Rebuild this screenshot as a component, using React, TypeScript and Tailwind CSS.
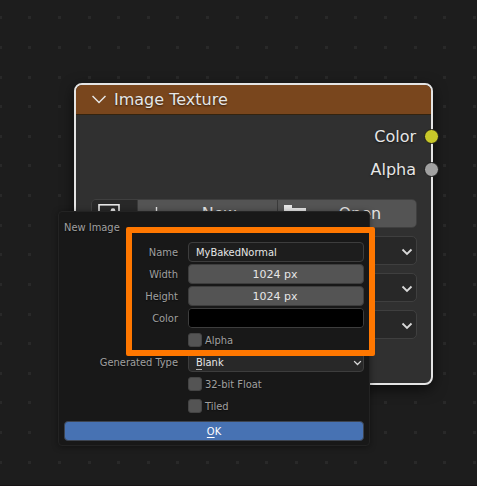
import type { ReactNode } from "react";

const GRID_STEP = 29.63;

function DotGrid() {
  const dots: ReactNode[] = [];
  for (let row = 0; row < 60; row++) {
    for (let col = 0; col < 80; col++) {
      dots.push(
        <rect
          key={`${row}-${col}`}
          x={Math.round(col * GRID_STEP - 1.3)}
          y={Math.round(row * GRID_STEP + 16.3)}
          width="3"
          height="3"
        />
      );
    }
  }
  return (
    <svg className="absolute inset-0 size-full" fill="#292929" aria-hidden="true">
      {dots}
    </svg>
  );
}

function Chevron({ className }: { className: string }) {
  return (
    <svg
      viewBox="0 0 12 8"
      className={className}
      fill="none"
      stroke="currentColor"
      strokeWidth="1.8"
      aria-hidden="true"
    >
      <path d="M1.5 1.5 L6 6 L10.5 1.5" />
    </svg>
  );
}

function HeaderChevron() {
  return (
    <svg
      viewBox="0 0 14 9"
      className="h-[9px] w-[14px]"
      fill="none"
      stroke="currentColor"
      strokeWidth="1.5"
      aria-hidden="true"
    >
      <path d="M0.5 1 L7 7.5 L13.5 1" />
    </svg>
  );
}

function ImageIcon() {
  return (
    <svg viewBox="0 0 22 20" className="h-5 w-[22px]" aria-hidden="true">
      <rect x="1" y="0.8" width="20" height="18" fill="none" stroke="#e6e6e6" strokeWidth="1.6" />
      <circle cx="15" cy="6.5" r="2.3" fill="#e6e6e6" />
      <path d="M3 17 L8 9 L12 14 L14 12 L19 17 Z" fill="#e6e6e6" />
    </svg>
  );
}

function PlusIcon() {
  return (
    <svg viewBox="0 0 16 16" className="size-4" stroke="#e6e6e6" strokeWidth="1.4" aria-hidden="true">
      <path d="M8.5 1 V15 M1.5 8 H15.5" />
    </svg>
  );
}

function FolderIcon() {
  return (
    <svg viewBox="0 0 22 18" className="h-[18px] w-[22px]" fill="#e6e6e6" aria-hidden="true">
      <path d="M0 0 H8 V3 H22 V6 H0 Z" />
      <path d="M0 8 H22 V17 H0 Z" />
    </svg>
  );
}

function Output({ name, socket }: { name: string; socket: string }) {
  return (
    <div className="relative flex h-[33px] items-center justify-end pr-[15px]">
      <span>{name}</span>
      <span className={`absolute -right-2 size-[15px] rounded-full border-[1.5px] border-[#1b1b1b] ${socket}`} />
    </div>
  );
}

function NodeSelect({ label, options }: { label: string; options: string[] }) {
  return (
    <div className="relative">
      <select
        aria-label={label}
        className="block h-[29px] w-full appearance-none rounded-[5px] border border-[#3f3f3f] bg-[#282828] px-2 text-base leading-5"
      >
        {options.map((o) => (
          <option key={o}>{o}</option>
        ))}
      </select>
      <Chevron className="pointer-events-none absolute top-3 right-1 h-2 w-3 text-[#d9d9d9]" />
    </div>
  );
}

function ImageTextureNode() {
  return (
    <section className="absolute top-[83px] left-[74px] w-[359px] rounded-lg border-2 border-[#e4e4e4] bg-[#303030] pb-11 font-['DejaVu_Sans',sans-serif] text-base leading-5 text-[#e6e6e6] shadow-[0_4px_14px_rgba(0,0,0,0.6)] [text-shadow:0_1px_2px_rgba(0,0,0,0.6)]">
      <header className="flex h-[30px] items-center gap-2 rounded-t-md border-b border-[#33230f] bg-[#79461d] pl-4">
        <HeaderChevron />
        <h1>Image Texture</h1>
      </header>
      <div className="pt-[5px]">
        <Output name="Color" socket="bg-[#c7c729]" />
        <Output name="Alpha" socket="bg-[#a1a1a1]" />
      </div>
      <div className="mt-[13px] flex flex-col gap-2 pr-[14px] pl-[15px]">
        <div className="flex h-[29px] gap-px overflow-hidden rounded-[5px] border border-[#3f3f3f] bg-[#3a3a3a]">
          <button aria-label="Browse image" className="flex w-[45px] items-center bg-[#282828] pl-[6px]">
            <ImageIcon />
          </button>
          <div className="grid flex-1 grid-cols-2 gap-px">
            <button className="flex items-center bg-[#545454] pl-[10px]">
              <PlusIcon />
              <span className="flex-1 pr-0.5 text-center">New</span>
            </button>
            <button className="flex items-center bg-[#545454] pl-[6px]">
              <FolderIcon />
              <span className="flex-1 pr-0.5 text-center">Open</span>
            </button>
          </div>
        </div>
        <NodeSelect label="Interpolation" options={["Linear", "Closest", "Cubic"]} />
        <NodeSelect label="Projection" options={["Flat", "Box", "Sphere"]} />
        <NodeSelect label="Extension" options={["Repeat", "Extend", "Clip"]} />
      </div>
    </section>
  );
}

function Row({ label, id, children }: { label: string; id: string; children: ReactNode }) {
  return (
    <div className="grid h-5 grid-cols-[114px_1fr] items-end gap-x-2.5">
      <label htmlFor={id} className="text-right leading-[18px]">
        {label}
      </label>
      {children}
    </div>
  );
}

function CheckRow({ label }: { label: string }) {
  return (
    <div className="grid h-5 grid-cols-[114px_1fr] items-center gap-x-2.5">
      <label className="col-start-2 flex items-center gap-[3px]">
        <input
          type="checkbox"
          className="size-[14px] appearance-none rounded-[3px] border border-[#444444] bg-[#545454] checked:bg-[#4772b3]"
        />
        <span className="pt-0.5">{label}</span>
      </label>
    </div>
  );
}

function SizeField({ id }: { id: string }) {
  return (
    <input
      id={id}
      defaultValue="1024 px"
      className="h-5 w-full rounded-[4px] border border-[#3d3d3d] bg-[#545454] pr-0.5 text-center font-['DejaVu_Sans',sans-serif] text-[#e6e6e6]"
    />
  );
}

function NewImageDialog() {
  return (
    <form
      aria-labelledby="dialog-title"
      className="absolute top-[211px] left-[58px] w-[312px] rounded-[4px] border border-[#232323] bg-[#181818] px-[5px] pb-1 text-[11px] leading-4 text-[#a0a0a0] shadow-[0_1px_6px_rgba(0,0,0,0.4)] [text-shadow:0_1px_1px_rgba(0,0,0,0.5)]"
    >
      <h2 id="dialog-title" className="flex h-[30px] items-end pb-1.5">
        New Image
      </h2>
      <div className="flex flex-col gap-0.5">
        <Row label="Name" id="name">
          <input
            id="name"
            defaultValue="MyBakedNormal"
            className="h-5 w-full rounded-[4px] border border-[#3d3d3d] bg-[#1d1d1d] px-[7px] text-[#e6e6e6]"
          />
        </Row>
        <Row label="Width" id="width">
          <SizeField id="width" />
        </Row>
        <Row label="Height" id="height">
          <SizeField id="height" />
        </Row>
        <Row label="Color" id="color">
          <input
            id="color"
            type="color"
            defaultValue="#000000"
            className="block h-5 w-full appearance-none rounded-[4px] border border-[#3d3d3d] bg-black p-0 [&::-webkit-color-swatch]:border-0 [&::-webkit-color-swatch-wrapper]:p-0"
          />
        </Row>
        <CheckRow label="Alpha" />
        <Row label="Generated Type" id="generated">
          <div className="relative">
            <select
              id="generated"
              className="block h-5 w-full appearance-none rounded-[4px] border border-[#3d3d3d] bg-[#282828] px-[7px] pt-0.5 text-[#e6e6e6]"
            >
              <option>Blank</option>
              <option>UV Grid</option>
              <option>Color Grid</option>
            </select>
            <span className="pointer-events-none absolute bottom-0.5 left-2 h-px w-[6px] bg-[#b0b0b0]" />
            <Chevron className="pointer-events-none absolute top-2 right-[2px] h-[6px] w-[9px] text-[#d9d9d9]" />
          </div>
        </Row>
        <CheckRow label="32-bit Float" />
        <CheckRow label="Tiled" />
      </div>
      <button
        type="button"
        className="mt-[5px] block h-5 w-full rounded-[4px] border border-[#3d4450] bg-[#4772b3] leading-5 text-white"
      >
        <span className="underline underline-offset-2">O</span>K
      </button>
    </form>
  );
}

export default function App() {
  return (
    <main className="relative min-h-screen w-full overflow-hidden border-b border-[#171314] bg-[#1d1d1d] font-['DejaVu_Sans_Condensed','DejaVu_Sans',sans-serif]">
      <DotGrid />
      <ImageTextureNode />
      <NewImageDialog />
      <div className="pointer-events-none absolute top-[227px] left-[126px] h-[129px] w-[249px] rounded-[2px] border-[6px] border-[#ff7700]" />
    </main>
  );
}
